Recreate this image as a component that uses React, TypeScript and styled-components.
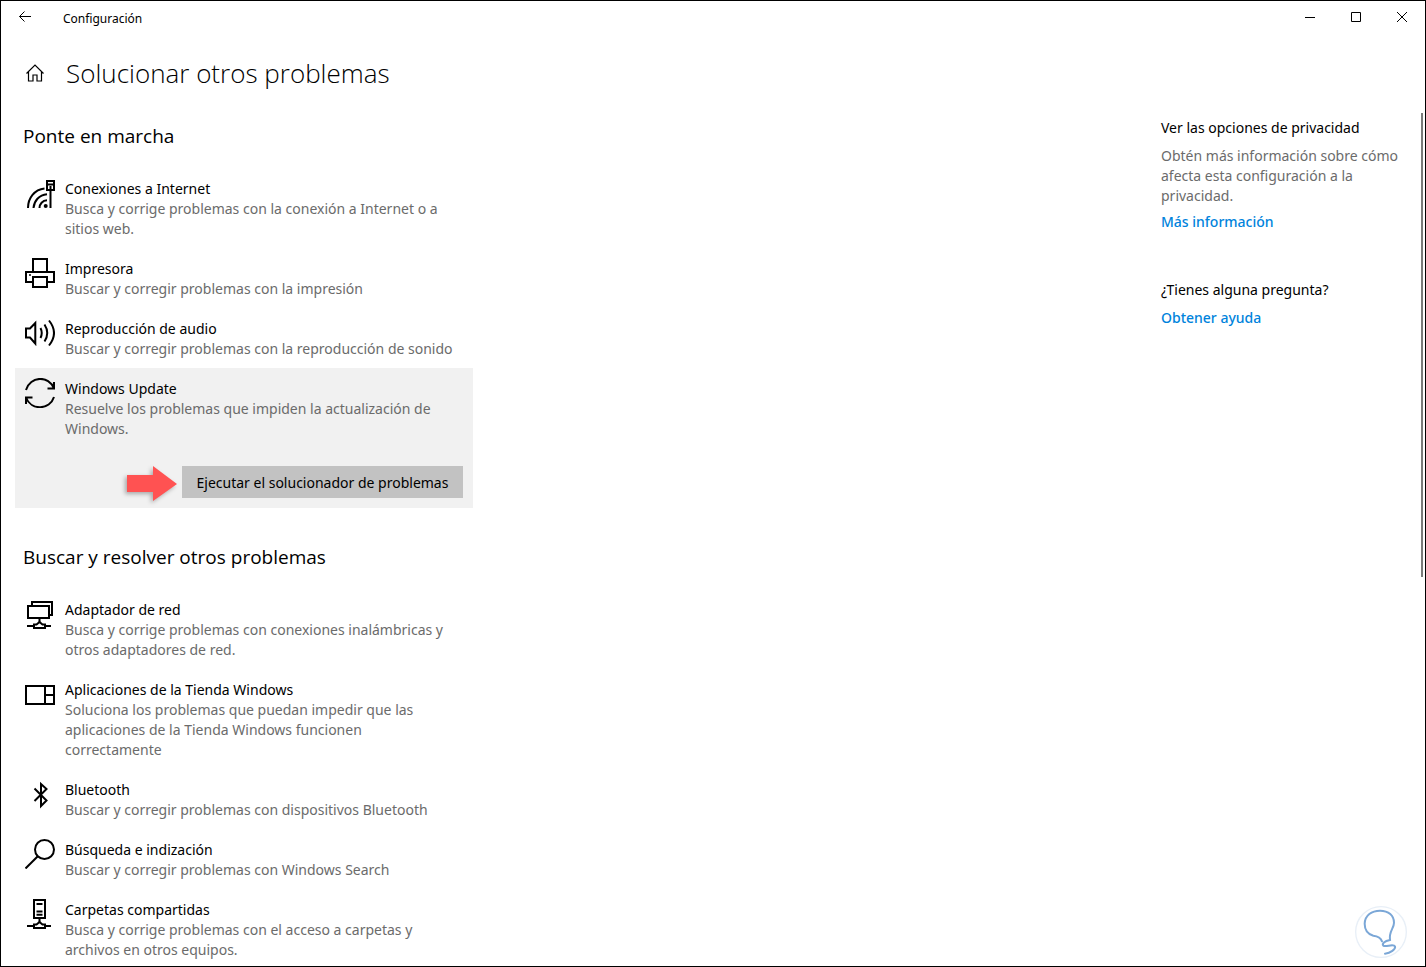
import React from 'react';
import styled, { createGlobalStyle } from 'styled-components';

const GlobalStyle = createGlobalStyle`
  *, *::before, *::after { box-sizing: border-box; }
  body {
    margin: 0;
    background: #fff;
    color: #000;
    font-family: "Segoe UI", "Noto Sans", "Open Sans", sans-serif;
    font-size: 14px;
    line-height: 20px;
  }
  h1, h2, h3, p, ul { margin: 0; padding: 0; font-weight: 400; }
  button { font: inherit; color: inherit; border: 0; padding: 0; background: none; }
`;

const Window = styled.div`
  position: relative;
  display: flex;
  flex-direction: column;
  min-height: 100vh;
  border: 1px solid #000;
`;

const TitleBar = styled.header`
  display: flex;
  align-items: center;
  height: 32px;
`;

const BarButton = styled.button`
  display: flex;
  align-items: center;
  justify-content: center;
  width: 46px;
  height: 32px;
`;

const AppName = styled.span`
  flex: 1;
  padding-left: 16px;
  padding-top: 3px;
  font-size: 12px;
`;

const PageHeader = styled.div`
  display: flex;
  align-items: center;
  gap: 21px;
  padding: 20px 24px 0;
`;

const HomeButton = styled.button`
  display: flex;
  width: 20px;
  height: 20px;
`;

const PageTitle = styled.h1`
  font-family: "Segoe UI", "Open Sans", sans-serif;
  font-size: 26px;
  line-height: 40px;
  font-weight: 350;
`;

const Body = styled.div`
  display: flex;
  flex: 1;
  justify-content: space-between;
  padding: 19px 2px 0 14px;
`;

const Main = styled.main`
  width: 458px;
  padding-top: 10px;
`;

const Section = styled.section`
  & + & { margin-top: 35px; }
`;

const SectionTitle = styled.h2`
  padding-left: 8px;
  margin-bottom: 18px;
  font-family: "Segoe UI", "Open Sans", sans-serif;
  font-size: 19px;
  line-height: 28px;
  font-weight: 380;
`;

const List = styled.ul`
  list-style: none;
`;

const Item = styled.li<{ $selected?: boolean }>`
  padding: 11px 10px 9px;
  background: ${(p) => (p.$selected ? '#f1f1f1' : 'transparent')};
  &:last-child { padding-bottom: ${(p) => (p.$selected ? '10px' : '0')}; }
`;

const ItemRow = styled.div`
  display: flex;
  gap: 10px;
`;

const ItemText = styled.div`
  max-width: 392px;
`;

const ItemIcon = styled.svg`
  flex: none;
  width: 30px;
  height: 30px;
  margin-top: -1px;
  fill: none;
  stroke: #000;
  stroke-width: 2;
`;

const Muted = styled.p`
  color: #6b6b6b;
`;

const Actions = styled.div`
  display: flex;
  align-items: center;
  justify-content: flex-end;
  gap: 4px;
  height: 32px;
  margin-top: 27px;
`;

const Pointer = styled.svg`
  width: 52px;
  height: 38px;
  overflow: visible;
  filter: drop-shadow(-2px 2px 2px rgba(0, 0, 0, 0.3));
`;

const RunButton = styled.button`
  width: 281px;
  height: 32px;
  padding-top: 2px;
  background: #c2c2c2;
`;

const Side = styled.div`
  display: flex;
  align-items: flex-start;
  gap: 16px;
`;

const Aside = styled.aside`
  display: flex;
  flex-direction: column;
  gap: 48px;
  width: 244px;
  padding-top: 6px;
`;

const HelpTitle = styled.h3`
  font-size: 14px;
  margin-bottom: 8px;
`;

const HelpText = styled(Muted)`
  margin-bottom: 6px;
`;

const HelpLink = styled.a`
  display: block;
  width: fit-content;
  color: #0083dc;
  font-weight: 500;
  text-decoration: none;
`;

const ScrollThumb = styled.div`
  width: 2px;
  height: 464px;
  margin-top: 1px;
  background: #7a7a7a;
`;

const Watermark = styled.svg`
  position: absolute;
  right: 18px;
  bottom: 8px;
  width: 52px;
  height: 52px;
`;

type Entry = { title: string; text: string; icon: React.ReactNode; selected?: boolean };

const base = (
  <path d="M2 27H8.5M20.5 27H26M9 29V25.5H11.5L14.5 23L17.5 25.5H20V29Z" />
);

const starters: Entry[] = [
  {
    title: 'Conexiones a Internet',
    text: 'Busca y corrige problemas con la conexión a Internet o a sitios web.',
    icon: (
      <>
        <path d="M3 30C3 20 9.5 11.5 19.5 10.5M8.5 30C9 23 14 17 22 16.3M14.5 30C14.5 26 17.5 22.5 22 22.3" />
        <path d="M22 3H29V12H22ZM22 6.5H29M25.5 8V30" />
        <circle cx="20.7" cy="28" r="2" fill="#000" stroke="none" />
      </>
    ),
  },
  {
    title: 'Impresora',
    text: 'Buscar y corregir problemas con la impresión',
    icon: (
      <>
        <path d="M8 24H1V14H29V24H22M8 14V1H22V14M8 19H22V29H8Z" />
        <circle cx="5" cy="17" r="1" fill="#000" stroke="none" />
      </>
    ),
  },
  {
    title: 'Reproducción de audio',
    text: 'Buscar y corregir problemas con la reproducción de sonido',
    icon: (
      <path d="M1 10.5H5L10.3 5V25.5L5 19.5H1ZM15.5 10Q18 15 15.5 20M19.5 6.5Q25 15 19.5 23.5M24 2.5Q34 15 24 27.5" />
    ),
  },
  {
    title: 'Windows Update',
    text: 'Resuelve los problemas que impiden la actualización de Windows.',
    selected: true,
    icon: (
      <path d="M1 12C5 -2 24 -3 29 10.5M29 4V10.5H22.5M29 19C25 32 6 33 1 19.5M1 26V19.5H7.5" />
    ),
  },
];

const others: Entry[] = [
  {
    title: 'Adaptador de red',
    text: 'Busca y corrige problemas con conexiones inalámbricas y otros adaptadores de red.',
    icon: (
      <>
        <path d="M3 7H24V19H3ZM7 7V3H27V16H24M14.5 19V23" />
        {base}
      </>
    ),
  },
  {
    title: 'Aplicaciones de la Tienda Windows',
    text: 'Soluciona los problemas que puedan impedir que las aplicaciones de la Tienda Windows funcionen correctamente',
    icon: <path d="M1 7H29V25H1ZM20 7V25M20 16H29" />,
  },
  {
    title: 'Bluetooth',
    text: 'Buscar y corregir problemas con dispositivos Bluetooth',
    icon: <path d="M9.5 9.5L21.5 21.5L16 27V5L21.5 10L9.5 22" />,
  },
  {
    title: 'Búsqueda e indización',
    text: 'Buscar y corregir problemas con Windows Search',
    icon: (
      <>
        <circle cx="19.5" cy="10.5" r="9.5" />
        <path d="M12.8 17.2L0.5 29.5" />
      </>
    ),
  },
  {
    title: 'Carpetas compartidas',
    text: 'Busca y corrige problemas con el acceso a carpetas y archivos en otros equipos.',
    icon: (
      <>
        <path d="M9 1H20V19H9ZM14.5 19V23M11.5 5H17.5M11.5 12.5H17.5M11.5 15.8H17.5" />
        {base}
      </>
    ),
  },
];

function Troubleshooter({ entry }: { entry: Entry }) {
  return (
    <Item $selected={entry.selected}>
      <ItemRow>
        <ItemIcon viewBox="0 0 30 30" aria-hidden="true">{entry.icon}</ItemIcon>
        <ItemText>
          <p>{entry.title}</p>
          <Muted>{entry.text}</Muted>
        </ItemText>
      </ItemRow>
      {entry.selected && (
        <Actions>
          <Pointer viewBox="0 0 52 38" aria-hidden="true">
            <path d="M1 12H27V3L51 21L27 38V29H1Z" fill="#ff5252" />
          </Pointer>
          <RunButton type="button">Ejecutar el solucionador de problemas</RunButton>
        </Actions>
      )}
    </Item>
  );
}

function Group({ title, entries }: { title: string; entries: Entry[] }) {
  return (
    <Section>
      <SectionTitle>{title}</SectionTitle>
      <List>
        {entries.map((e) => (
          <Troubleshooter key={e.title} entry={e} />
        ))}
      </List>
    </Section>
  );
}

export default function App() {
  return (
    <>
      <GlobalStyle />
      <Window>
        <TitleBar>
          <BarButton type="button" aria-label="Atrás">
            <svg width="14" height="12" viewBox="0 0 14 12" fill="none" stroke="#000">
              <path d="M2.5 5.5H14M7.5 0.5L2.5 5.5L7.5 10.5" />
            </svg>
          </BarButton>
          <AppName>Configuración</AppName>
          <BarButton type="button" aria-label="Minimizar">
            <svg width="10" height="10" viewBox="0 0 10 10" stroke="#000">
              <path d="M0 5.5H10" />
            </svg>
          </BarButton>
          <BarButton type="button" aria-label="Maximizar">
            <svg width="10" height="10" viewBox="0 0 10 10" fill="none" stroke="#000">
              <path d="M0.5 0.5H9.5V9.5H0.5Z" />
            </svg>
          </BarButton>
          <BarButton type="button" aria-label="Cerrar">
            <svg width="10" height="10" viewBox="0 0 10 10" stroke="#000">
              <path d="M0 0L10 10M10 0L0 10" />
            </svg>
          </BarButton>
        </TitleBar>
        <PageHeader>
          <HomeButton type="button" aria-label="Inicio">
            <svg width="20" height="20" viewBox="0 0 20 20" fill="none" stroke="#000" strokeWidth="1.2">
              <path d="M1.5 10.5L10 2L18.5 10.5M3.5 9V18H8V12H12V18H16.5V9" />
            </svg>
          </HomeButton>
          <PageTitle>Solucionar otros problemas</PageTitle>
        </PageHeader>
        <Body>
          <Main>
            <Group title="Ponte en marcha" entries={starters} />
            <Group title="Buscar y resolver otros problemas" entries={others} />
          </Main>
          <Side>
            <Aside>
              <div>
                <HelpTitle>Ver las opciones de privacidad</HelpTitle>
                <HelpText>Obtén más información sobre cómo afecta esta configuración a la privacidad.</HelpText>
                <HelpLink href="#privacidad">Más información</HelpLink>
              </div>
              <div>
                <HelpTitle>¿Tienes alguna pregunta?</HelpTitle>
                <HelpLink href="#ayuda">Obtener ayuda</HelpLink>
              </div>
            </Aside>
            <ScrollThumb />
          </Side>
        </Body>
        <Watermark viewBox="0 0 156 156" fill="none" aria-hidden="true">
          <circle cx="78" cy="78" r="76" fill="#fff" stroke="#e8eff7" strokeWidth="4" />
          <path
            d="M81 106C76 92 66 90 55 89C38 84 29 70 29 53C30 28 50 14 75 14C101 14 117 29 117 50C117 68 101 76 105 102C88 105 80 113 85 119C92 124 116 112 120 121C123 130 106 141 90 143"
            stroke="#7ba7d7"
            strokeWidth="6"
            strokeLinecap="round"
          />
        </Watermark>
      </Window>
    </>
  );
}
